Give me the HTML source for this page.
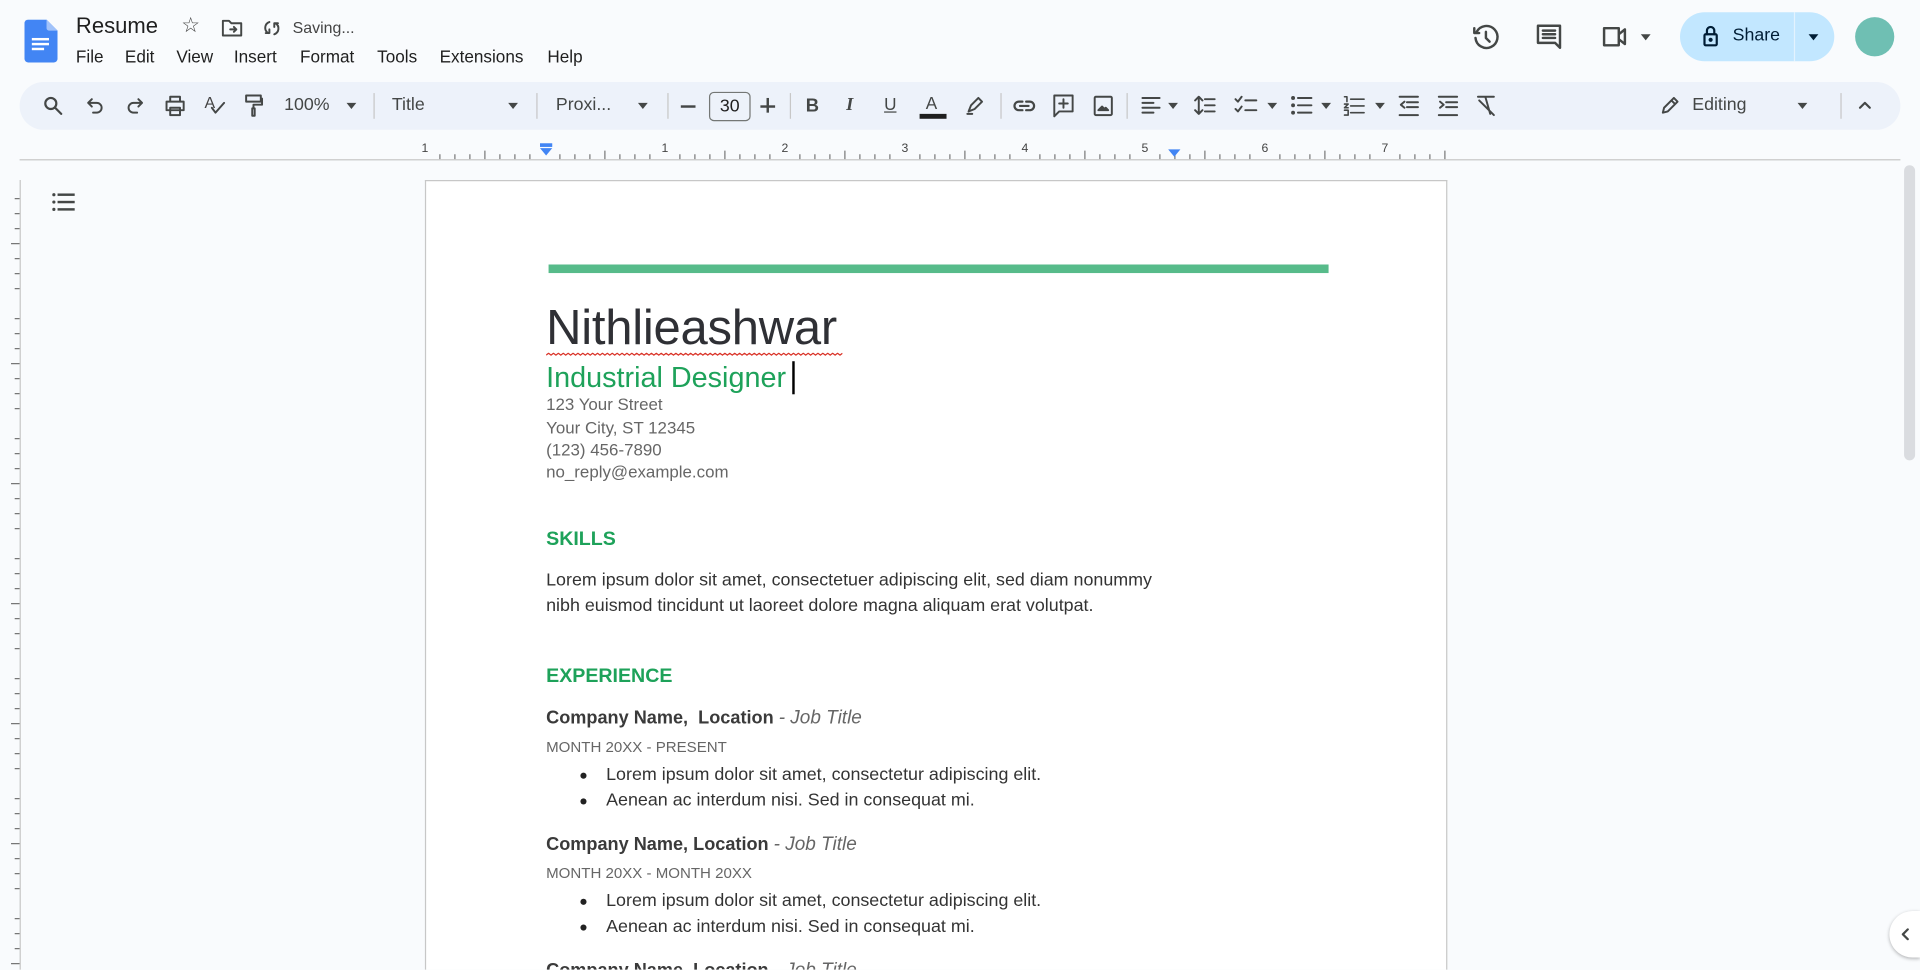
<!DOCTYPE html>
<html><head><meta charset="utf-8"><style>
html,body{margin:0;padding:0;width:1920px;height:970px;overflow:hidden;background:#f9fbfd}
#w{position:absolute;left:0;top:0;width:1568px;height:792px;overflow:hidden;transform:scale(1.22449);transform-origin:0 0;font-family:"Liberation Sans",sans-serif;color:#1f1f1f}
.a{position:absolute;white-space:nowrap}
svg.i{position:absolute;fill:none;stroke:#444746;stroke-width:1.6;stroke-linecap:round;stroke-linejoin:round}
.sep{position:absolute;top:76px;width:1px;height:21px;background:#c7c7c7}
.car{position:absolute;width:0;height:0;border-left:4px solid transparent;border-right:4px solid transparent;border-top:5px solid #444746}
.tb{font-size:14.5px;color:#444746;top:78px}
.doc{position:absolute;left:446px;white-space:nowrap;font-family:"Liberation Sans",sans-serif}
.addr{font-size:13.8px;color:#666}
.body{font-size:14.6px;color:#333}
.h{font-size:16px;font-weight:bold;color:#1ea25a}
.co{font-size:14.8px;font-weight:bold;color:#3a3a3a;height:18px;overflow:hidden}
.co i{font-weight:normal;color:#666;font-size:15.5px}
.mo{font-size:12.3px;color:#666}
.bl{left:474px}
.bl:before{content:"";position:absolute;left:0;top:6px;width:5px;height:5px;border-radius:50%;background:#222}
.bl span{margin-left:21px}
</style></head><body><div id="w">
<svg style="position:absolute;left:20px;top:16px" width="27" height="35" viewBox="0 0 27 35"><path d="M3 0h15l9 9v23a3 3 0 0 1-3 3H3a3 3 0 0 1-3-3V3a3 3 0 0 1 3-3z" fill="#4285f4"/><path d="M18 0v7a2 2 0 0 0 2 2h7z" fill="#a1c2fa"/><rect x="6" y="15" width="14" height="2" fill="#fff"/><rect x="6" y="19" width="14" height="2" fill="#fff"/><rect x="6" y="23" width="10" height="2" fill="#fff"/></svg>
<div class="a" style="left:62px;top:11px;font-size:18px;color:#1f1f1f">Resume</div>
<div class="a" style="left:148px;top:11px;font-size:17px;color:#444">☆</div>
<svg class="i" style="left:181px;top:15px" width="18" height="16" viewBox="0 0 18 16"><path d="M1 2h5l2 2h8v10H1z"/><path d="M7 9h5M10 7l2 2-2 2"/></svg>
<svg class="i" style="left:214px;top:15px" width="16" height="16" viewBox="0 0 16 16"><path d="M6 3a5 5 0 0 0-1 9M10 13a5 5 0 0 0 1-9M3 12h3v-3M13 4h-3v3"/></svg>
<div class="a" style="left:239px;top:15px;font-size:13px;color:#444">Saving...</div>
<div class="a" style="top:38px;font-size:14px;color:#1f1f1f;left:0">
<span class="a" style="left:62px">File</span><span class="a" style="left:102px">Edit</span><span class="a" style="left:144px">View</span><span class="a" style="left:191px">Insert</span><span class="a" style="left:245px">Format</span><span class="a" style="left:308px">Tools</span><span class="a" style="left:359px">Extensions</span><span class="a" style="left:447px">Help</span></div>
<svg class="i" style="left:1202px;top:19px;stroke-width:2" width="23" height="23" viewBox="0 0 23 23"><path d="M4 7a9 9 0 1 1-1 5M2 4v4h4M11.5 7v5l3 3"/></svg>
<svg class="i" style="left:1254px;top:19px;stroke-width:2" width="22" height="22" viewBox="0 0 22 22"><path d="M2 2h18v14H6l-4 4z" transform="scale(-1 1) translate(-22 0)"/><path d="M6 6h10M6 9h10M6 12h10"/></svg>
<svg class="i" style="left:1307px;top:21px;stroke-width:2" width="26" height="18" viewBox="0 0 26 18"><path d="M3 2h12v14H3zM15 7l5-4v12l-5-4"/></svg>
<div class="car" style="left:1340px;top:28px"></div>
<div class="a" style="left:1372px;top:10px;width:126px;height:40px;border-radius:20px;background:#c2e7ff"></div>
<div class="a" style="left:1465px;top:10px;width:1px;height:40px;background:#f9fbfd;opacity:.6"></div>
<svg class="i" style="left:1390px;top:21px;stroke:#001d35;stroke-width:1.8" width="14" height="18" viewBox="0 0 14 18"><rect x="2" y="7" width="10" height="9" rx="1"/><path d="M4 7V4a3 3 0 0 1 6 0v3"/><circle cx="7" cy="11.5" r=".8" fill="#001d35"/></svg>
<div class="a" style="left:1415px;top:21px;font-size:14.5px;color:#001d35">Share</div>
<div class="car" style="left:1477px;top:28px;border-top-color:#001d35"></div>
<div class="a" style="left:1515px;top:14px;width:32px;height:32px;border-radius:50%;background:#6fbfb3"></div>
<div class="a" style="left:16px;top:67px;width:1536px;height:39px;border-radius:20px;background:#edf2fa"></div>
<svg class="i" style="left:35px;top:78px;stroke-width:1.8" width="16" height="16" viewBox="0 0 16 16"><circle cx="6.5" cy="6.5" r="4.5"/><path d="M10 10l5 5"/></svg>
<svg class="i" style="left:71px;top:79px" width="14" height="14" viewBox="0 0 14 14"><path d="M4 2L1 5l3 3M1 5h7a4 4 0 0 1 0 8H5"/></svg>
<svg class="i" style="left:103px;top:79px" width="14" height="14" viewBox="0 0 14 14"><path d="M10 2l3 3-3 3M13 5H6a4 4 0 0 0 0 8h3"/></svg>
<svg class="i" style="left:134px;top:78px" width="18" height="17" viewBox="0 0 18 17"><path d="M5 5V1h8v4M2 5h14v7H2zM5 10h8v6H5z"/></svg>
<div class="a" style="left:167px;top:76px;font-size:13px;color:#444">A</div>
<svg class="i" style="left:172px;top:83px" width="12" height="10" viewBox="0 0 12 10"><path d="M1 5l3 4 7-8"/></svg>
<svg class="i" style="left:200px;top:77px" width="15" height="19" viewBox="0 0 15 19"><path d="M1 1h12v5H1zM13 3.5h1v5H7v3M6 11.5h2v6H6z"/></svg>
<div class="a tb" style="left:232px">100%</div><div class="car" style="left:283px;top:84px"></div>
<div class="sep" style="left:305px"></div>
<div class="a tb" style="left:320px">Title</div><div class="car" style="left:415px;top:84px"></div>
<div class="sep" style="left:438px"></div>
<div class="a tb" style="left:454px">Proxi...</div><div class="car" style="left:521px;top:84px"></div>
<div class="sep" style="left:545px"></div>
<div class="a" style="left:556px;top:86px;width:12px;height:1.6px;background:#444746"></div>
<div class="a" style="left:579px;top:75px;width:32px;height:22px;border:1px solid #747775;border-radius:4px;font-size:14.5px;color:#1f1f1f;text-align:center;line-height:22px">30</div>
<div class="a" style="left:621px;top:86px;width:12px;height:1.6px;background:#444746"></div><div class="a" style="left:626.2px;top:80px;width:1.6px;height:12px;background:#444746"></div>
<div class="sep" style="left:645px"></div>
<div class="a" style="left:658px;top:78px;font-size:15px;font-weight:bold;color:#444746">B</div>
<div class="a" style="left:691px;top:78px;font-size:15px;font-style:italic;font-weight:bold;font-family:'Liberation Serif',serif;color:#444746">I</div>
<div class="a" style="left:722px;top:77px;font-size:14px;color:#444746;text-decoration:underline">U</div>
<div class="a" style="left:756px;top:76px;font-size:14px;color:#444746">A</div><div class="a" style="left:751px;top:93px;width:22px;height:4px;background:#1f1f1f"></div>
<svg class="i" style="left:788px;top:78px" width="16" height="16" viewBox="0 0 16 16"><path d="M3 13l2-5 6-6 3 3-6 6zM2 15h4"/></svg>
<div class="sep" style="left:817px"></div>
<svg class="i" style="left:827px;top:81px;stroke-width:1.8" width="19" height="11" viewBox="0 0 19 11"><path d="M8 2H5a3.5 3.5 0 0 0 0 7h3M11 2h3a3.5 3.5 0 0 1 0 7h-3M6 5.5h7"/></svg>
<svg class="i" style="left:860px;top:77px" width="17" height="19" viewBox="0 0 17 19"><path d="M1 1h15v13H5l-4 4zM8.5 4v7M5 7.5h7"/></svg>
<svg class="i" style="left:893px;top:78px" width="16" height="17" viewBox="0 0 16 17"><rect x="1" y="1" width="14" height="15" rx="1"/><path d="M4 12l3-3 2 2 1-1 2 2z" fill="#444746"/></svg>
<div class="sep" style="left:920px"></div>
<svg class="i" style="left:932px;top:79px" width="16" height="15" viewBox="0 0 16 15"><path d="M1 1h14M1 5h9M1 9h14M1 13h9"/></svg><div class="car" style="left:954px;top:84px"></div>
<svg class="i" style="left:975px;top:78px" width="18" height="16" viewBox="0 0 18 16"><path d="M4 1v14M1 4l3-3 3 3M1 12l3 3 3-3M9 3h8M9 8h8M9 13h8"/></svg>
<svg class="i" style="left:1008px;top:78px" width="20" height="16" viewBox="0 0 20 16"><path d="M1 3l2 2 3-4M1 11l2 2 3-4M9 4h9M9 12h9"/></svg><div class="car" style="left:1035px;top:84px"></div>
<svg class="i" style="left:1054px;top:78px" width="18" height="16" viewBox="0 0 18 16"><circle cx="2" cy="2" r=".8" fill="#444746"/><circle cx="2" cy="8" r=".8" fill="#444746"/><circle cx="2" cy="14" r=".8" fill="#444746"/><path d="M6 2h11M6 8h11M6 14h11"/></svg><div class="car" style="left:1079px;top:84px"></div>
<svg class="i" style="left:1097px;top:78px" width="18" height="17" viewBox="0 0 18 17"><path d="M1 1h2v4M1 7h3l-3 3h3M1 12h3v4H1M6 3h11M6 8.5h11M6 14h11" stroke-width="1.3"/></svg><div class="car" style="left:1123px;top:84px"></div>
<svg class="i" style="left:1142px;top:78px" width="17" height="17" viewBox="0 0 17 17"><path d="M1 1h15M7 5.5h9M7 9.5h9M1 16h15M5 5L2 7.5 5 10"/></svg>
<svg class="i" style="left:1174px;top:78px" width="17" height="17" viewBox="0 0 17 17"><path d="M1 1h15M7 5.5h9M7 9.5h9M1 16h15M2 5l3 2.5L2 10"/></svg>
<svg class="i" style="left:1205px;top:77px" width="18" height="18" viewBox="0 0 18 18"><path d="M2 2h13M8 2l4 14M3 5l12 12"/></svg>
<svg class="i" style="left:1356px;top:79px" width="15" height="15" viewBox="0 0 15 15"><path d="M2 13l1-4 8-8 3 3-8 8zM9 3l3 3"/></svg>
<div class="a tb" style="left:1382px">Editing</div><div class="car" style="left:1468px;top:84px"></div>
<div class="sep" style="left:1503px"></div>
<svg class="i" style="left:1517px;top:82px;stroke-width:1.8" width="12" height="8" viewBox="0 0 12 8"><path d="M2 6l4-4 4 4"/></svg>
<div class="a" style="left:16px;top:130px;width:1536px;height:1px;background:#c7c7c7"></div>
<svg style="position:absolute;left:0;top:112px" width="1568" height="20">
<g stroke="#777" stroke-width="1"><path id="tk" d=""/></g>
<g font-family="Liberation Sans" font-size="10" fill="#444" text-anchor="middle">
<text x="347" y="12">1</text><text x="543" y="12">1</text><text x="641" y="12">2</text><text x="739" y="12">3</text><text x="837" y="12">4</text><text x="935" y="12">5</text><text x="1033" y="12">6</text><text x="1131" y="12">7</text></g>
<rect x="441" y="5" width="10" height="3" fill="#4285f4"/><path d="M441 9h10l-5 6z" fill="#4285f4"/><path d="M954 10h10l-5 6z" fill="#4285f4"/>
</svg>
<div class="a" style="left:16px;top:147px;width:1px;height:645px;background:#c7c7c7"></div>
<svg style="position:absolute;left:0;top:147px" width="17" height="645" id="lr"></svg>
<svg style="position:absolute;left:42px;top:157px" width="20" height="16" viewBox="0 0 20 16"><g fill="#444746"><circle cx="2" cy="2" r="1.3"/><circle cx="2" cy="8" r="1.3"/><circle cx="2" cy="14" r="1.3"/><rect x="5" y="1" width="14" height="2"/><rect x="5" y="7" width="14" height="2"/><rect x="5" y="13" width="14" height="2"/></g></svg>
<div class="a" style="left:347px;top:147px;width:833px;height:644px;background:#fff;border:1px solid #c7c7c7;border-bottom:none"></div>
<div class="a" style="left:448px;top:216px;width:637px;height:7px;background:#57bb8a"></div>
<div class="doc" style="top:246px;font-size:40px;color:#2f3035;letter-spacing:-0.2px">Nithlieashwar</div>
<svg style="position:absolute;left:446px;top:288px" width="242" height="4"><path id="sq" d="" fill="none" stroke="#d93025" stroke-width="1"/></svg>
<div class="doc" style="top:295px;font-size:23.5px;color:#1ea25a">Industrial Designer</div>
<div class="a" style="left:647px;top:295px;width:1.5px;height:27px;background:#000"></div>
<div class="doc addr" style="top:323px">123 Your Street</div>
<div class="doc addr" style="top:342px">Your City, ST 12345</div>
<div class="doc addr" style="top:360px">(123) 456-7890</div>
<div class="doc addr" style="top:378px">no_reply@example.com</div>
<div class="doc h" style="top:432px">SKILLS</div>
<div class="doc body" style="top:466px">Lorem ipsum dolor sit amet, consectetuer adipiscing elit, sed diam nonummy</div>
<div class="doc body" style="top:487px">nibh euismod tincidunt ut laoreet dolore magna aliquam erat volutpat.</div>
<div class="doc h" style="top:544px">EXPERIENCE</div>
<div class="doc co" style="top:578px">Company Name,&nbsp; Location <i>- Job Title</i></div>
<div class="doc mo" style="top:603px">MONTH 20XX - PRESENT</div>
<div class="doc body bl" style="top:625px"><span>Lorem ipsum dolor sit amet, consectetur adipiscing elit.</span></div>
<div class="doc body bl" style="top:646px"><span>Aenean ac interdum nisi. Sed in consequat mi.</span></div>
<div class="doc co" style="top:681px">Company Name, Location <i>- Job Title</i></div>
<div class="doc mo" style="top:706px">MONTH 20XX - MONTH 20XX</div>
<div class="doc body bl" style="top:728px"><span>Lorem ipsum dolor sit amet, consectetur adipiscing elit.</span></div>
<div class="doc body bl" style="top:749px"><span>Aenean ac interdum nisi. Sed in consequat mi.</span></div>
<div class="doc co" style="top:784px;height:8px">Company Name, Location <i>- Job Title</i></div>
<div class="a" style="left:1555px;top:135px;width:9px;height:241px;border-radius:5px;background:#dadce0"></div>
<div class="a" style="left:1543px;top:744px;width:25px;height:38px;border-radius:19px 0 0 19px;background:#fff;box-shadow:0 1px 3px rgba(0,0,0,.3)"></div>
<svg class="i" style="left:1552px;top:758px;stroke-width:1.8" width="8" height="10" viewBox="0 0 8 10"><path d="M6 1L2 5l4 4"/></svg>
</div>
<script>
(function(){var d="";for(var x=347;x<=1181;x+=12.25){var k=Math.round((x-347)/12.25)%8;var h=k==0?0:(k==4?7:4);if(h)d+="M"+x+" "+(18-h)+"v"+h;}
document.getElementById("tk").setAttribute("d",d);
var q="M0 2";for(var i=0;i<121;i++){q+=" l2 "+(i%2?1.5:-1.5);}document.getElementById("sq").setAttribute("d",q);
var n="http://www.w3.org/2000/svg",svg=document.getElementById("lr");
for(var y=0;y<640;y+=12.25){var k=Math.round(y/12.25)%8;var w=k==4?7:4;if(k!=0){var l=document.createElementNS(n,"line");l.setAttribute("x1",16-w);l.setAttribute("x2",16);l.setAttribute("y1",y+3);l.setAttribute("y2",y+3);l.setAttribute("stroke","#777");svg.appendChild(l);}}
})();
</script>
</body></html>
